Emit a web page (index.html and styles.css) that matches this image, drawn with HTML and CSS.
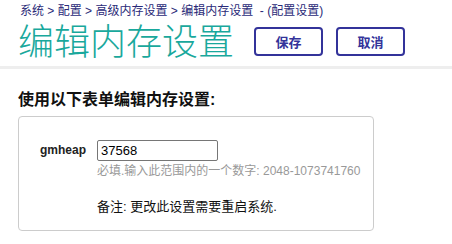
FILE: index.html
```html
<!DOCTYPE html>
<html lang="zh-CN">
<head>
<meta charset="utf-8">
<link rel="stylesheet" href="styles.css">
</head>
<body>
<header class="header">
  <nav class="crumbs">
    <a href="#">系统</a> <span class="sep">&gt;</span> <a href="#">配置</a> <span class="sep">&gt;</span> <a href="#">高级内存设置</a> <span class="sep">&gt;</span> <a href="#">编辑内存设置</a> <span class="ctx">&nbsp;- (配置设置)</span>
  </nav>
  <div class="title-row">
    <h1 class="title">编辑内存设置</h1>
    <div class="actions">
      <button class="btn">保存</button>
      <button class="btn">取消</button>
    </div>
  </div>
</header>
<main class="content">
  <h2 class="section-title">使用以下表单编辑内存设置:</h2>
  <div class="panel">
    <div class="field">
      <label class="label">gmheap</label>
      <div class="control">
        <input class="input" type="text" value="37568">
        <div class="hint">必填.输入此范围内的一个数字: 2048-1073741760</div>
      </div>
    </div>
    <div class="note">备注: 更改此设置需要重启系统.</div>
  </div>
</main>
</body>
</html>
```
FILE: styles.css
```css
html, body {
  margin: 0;
  padding: 0;
  background: #fff;
  font-family: "Liberation Sans", Arial, "Noto Sans CJK SC", sans-serif;
}
.header {
  padding: 4px 0 0 20px;
  border-bottom: 3px solid #eeeeee;
  height: 62px;
  box-sizing: content-box;
}
.crumbs {
  font-size: 12px;
  line-height: 14px;
  color: #2a2a78;
}
.crumbs a {
  color: #2a2a78;
  text-decoration: none;
}
.sep { color: #2a2a78; }
.title-row {
  display: flex;
  align-items: flex-start;
  margin-top: 6px;
  margin-left: -2px;
}
.title {
  margin: 0;
  font-size: 36px;
  line-height: 38px;
  font-weight: 300;
  color: #19a89c;
  letter-spacing: 0;
}
.actions {
  display: flex;
  gap: 13px;
  margin-left: 20px;
  margin-top: 3px;
}
.btn {
  width: 69px;
  height: 29px;
  border: 2px solid #33339a;
  border-radius: 4px;
  background: #fff;
  color: #33339a;
  font-size: 13px;
  font-weight: bold;
  font-family: "Liberation Sans", Arial, "Noto Sans CJK SC", sans-serif;
  padding: 0;
}
.content {
  padding: 0 78px 0 18px;
}
.section-title {
  margin: 21px 0 0 0;
  font-size: 16px;
  line-height: 20px;
  font-weight: bold;
  color: #111;
}
.panel {
  margin-top: 6px;
  border: 1px solid #cccccc;
  border-radius: 4px;
  height: 115px;
  padding: 23px 0 0 21px;
  box-sizing: border-box;
}
.field {
  display: flex;
  align-items: flex-start;
}
.label {
  width: 57px;
  font-size: 12px;
  font-weight: bold;
  color: #222;
  line-height: 20px;
}
.input {
  width: 121px;
  height: 21px;
  box-sizing: border-box;
  border: 1px solid #767676;
  border-radius: 2px;
  padding: 0 3px;
  font-size: 13px;
  font-family: "Liberation Sans", Arial, sans-serif;
  color: #000;
  margin: 0;
  display: block;
}
.hint {
  margin-top: 3px;
  font-size: 12px;
  line-height: 14px;
  color: #999;
}
.note {
  margin: 22px 0 0 57px;
  font-size: 13px;
  line-height: 14px;
  color: #111;
}
```
